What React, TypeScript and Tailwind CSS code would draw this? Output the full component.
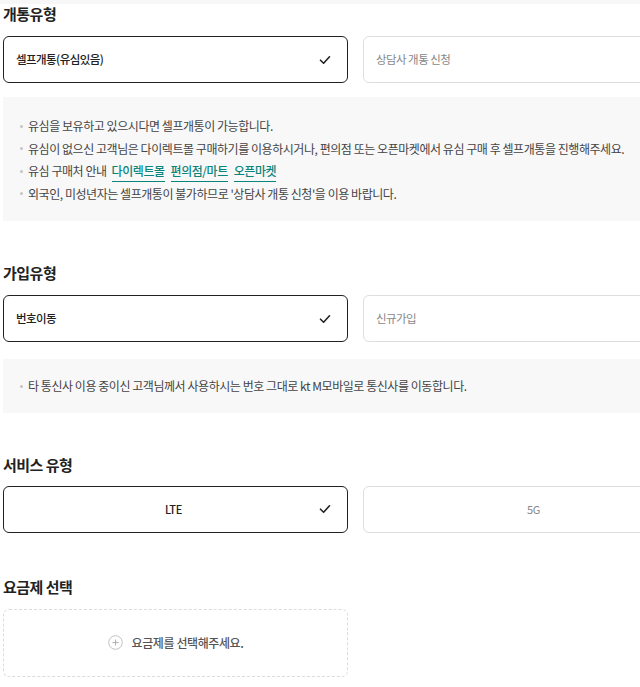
import React from 'react'

const font = { fontFamily: '"Noto Sans CJK KR", "Noto Sans", sans-serif' }

function Check() {
  return (
    <svg width="12" height="10" viewBox="0 0 12 10" fill="none">
      <path d="M1.5 5.2 L4.6 8.2 L10.5 1.8" stroke="#222" strokeWidth="1.6" strokeLinecap="round" strokeLinejoin="round" />
    </svg>
  )
}

function Heading({ children }: { children: React.ReactNode }) {
  return <h2 className="h-5 leading-5 text-[15px] font-bold tracking-[-0.5px] text-[#222]">{children}</h2>
}

function Option({ label, selected, center }: { label: string; selected?: boolean; center?: boolean }) {
  return (
    <div
      className={`h-[47px] w-[345px] rounded-[6px] border grid grid-cols-[1fr_auto_1fr] items-center pl-[12px] pr-[16px] ${
        selected ? 'border-[#222] bg-white' : 'border-[#dedede] bg-white'
      }`}
    >
      {center ? (
        <>
          <span />
          <span className={`text-[11px] tracking-[-0.4px] ${selected ? 'font-medium text-[#222]' : 'text-[#888]'}`}>{label}</span>
        </>
      ) : (
        <span className={`col-span-2 text-[11.5px] tracking-[-0.55px] ${selected ? 'font-medium text-[#222]' : 'text-[#888]'}`}>{label}</span>
      )}
      <span className="justify-self-end flex items-center">{selected && <Check />}</span>
    </div>
  )
}

function Bullet({ children }: { children: React.ReactNode }) {
  return (
    <li className="flex items-center gap-[5px]">
      <span className="w-[3px] h-[3px] rounded-full bg-[#c4c4c4]" />
      <span className="flex items-center">{children}</span>
    </li>
  )
}

function Link({ children }: { children: React.ReactNode }) {
  return (
    <span className="text-[#0a857c] font-medium border-b border-[#0a857c] leading-[16px] pb-[2px] mt-[3px] mr-[6px] last:mr-0">{children}</span>
  )
}

export default function App() {
  return (
    <div className="w-[640px] h-[687px] overflow-hidden bg-white" style={font}>
      <div className="h-[4px] bg-[#f7f7f7]" />
      <div className="w-[710px] pl-[3px]">
        <Heading>개통유형</Heading>
        <div className="mt-[12px] flex gap-[15px]">
          <Option label="셀프개통(유심있음)" selected />
          <Option label="상담사 개통 신청" />
        </div>
        <ul className="mt-[14px] bg-[#f8f8f8] pl-[17px] pt-[18px] pb-[16px] text-[12px] tracking-[-0.45px] text-[#444] leading-[22.5px]">
          <Bullet>유심을 보유하고 있으시다면 셀프개통이 가능합니다.</Bullet>
          <Bullet>유심이 없으신 고객님은 다이렉트몰 구매하기를 이용하시거나, 편의점 또는 오픈마켓에서 유심 구매 후 셀프개통을 진행해주세요.</Bullet>
          <Bullet>
            <span className="mr-[5px]">유심 구매처 안내</span>
            <Link>다이렉트몰</Link>
            <Link>편의점/마트</Link>
            <Link>오픈마켓</Link>
          </Bullet>
          <Bullet>외국인, 미성년자는 셀프개통이 불가하므로 '상담사 개통 신청'을 이용 바랍니다.</Bullet>
        </ul>

        <div className="mt-[42px]">
          <Heading>가입유형</Heading>
        </div>
        <div className="mt-[12px] flex gap-[15px]">
          <Option label="번호이동" selected />
          <Option label="신규가입" />
        </div>
        <ul className="mt-[17px] bg-[#f8f8f8] pl-[17px] pt-[16px] pb-[15px] text-[12px] tracking-[-0.45px] text-[#444] leading-[22.5px]">
          <Bullet>타 통신사 이용 중이신 고객님께서 사용하시는 번호 그대로 kt M모바일로 통신사를 이동합니다.</Bullet>
        </ul>

        <div className="mt-[42px]">
          <Heading>서비스 유형</Heading>
        </div>
        <div className="mt-[11px] flex gap-[15px]">
          <Option label="LTE" selected center />
          <Option label="5G" center />
        </div>

        <div className="mt-[44px]">
          <Heading>요금제 선택</Heading>
        </div>
        <div className="mt-[12px] w-[345px] h-[68px] rounded-[6px] border border-dashed border-[#dcdcdc] flex items-center justify-center gap-[9px]">
          <svg width="15" height="15" viewBox="0 0 15 15" fill="none">
            <circle cx="7.5" cy="7.5" r="6.8" stroke="#c2c2c2" strokeWidth="1" />
            <path d="M7.5 4.5 V10.5 M4.5 7.5 H10.5" stroke="#b0b0b0" strokeWidth="1" />
          </svg>
          <span className="text-[12px] font-medium tracking-[-0.4px] text-[#555]">요금제를 선택해주세요.</span>
        </div>
      </div>
    </div>
  )
}
